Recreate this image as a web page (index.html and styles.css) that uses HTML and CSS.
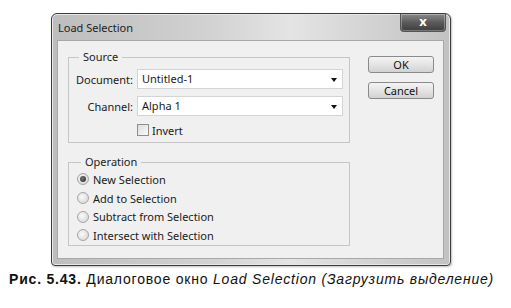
FILE: index.html
```html
<!DOCTYPE html>
<html lang="ru">
<head>
  <meta charset="UTF-8" />
  <title>Load Selection</title>
  <link rel="stylesheet" href="styles.css">
</head>
<body>

<div class="dialog">
  <div class="titlebar">
    <span class="title">Load Selection</span>
    <span class="close">x</span>
  </div>

  <div class="panel">
    <div class="groups">
      <fieldset class="group source">
        <legend>Source</legend>
        <div class="row">
          <label class="lbl">Document:</label>
          <div class="select">Untitled-1<span class="arrow"></span></div>
        </div>
        <div class="row">
          <label class="lbl">Channel:</label>
          <div class="select">Alpha 1<span class="arrow"></span></div>
        </div>
        <div class="row">
          <span class="lbl"></span>
          <label class="check"><span class="box"></span>Invert</label>
        </div>
      </fieldset>

      <fieldset class="group operation">
        <legend>Operation</legend>
        <label class="radio"><span class="dot on"></span>New Selection</label>
        <label class="radio"><span class="dot"></span>Add to Selection</label>
        <label class="radio"><span class="dot"></span>Subtract from Selection</label>
        <label class="radio"><span class="dot"></span>Intersect with Selection</label>
      </fieldset>
    </div>

    <div class="buttons">
      <button class="btn">OK</button>
      <button class="btn">Cancel</button>
    </div>
  </div>
</div>

<p class="caption"><b>Рис. 5.43.</b> Диалоговое окно <i>Load Selection (Загрузить выделение)</i></p>

</body>
</html>
```

FILE: styles.css
```css
body {
  margin: 0;
  background: white;
  font-family: "Noto Sans", sans-serif;
  font-size: 11px;
  color: #1a1a1a;
}
.dialog {
  margin: 13px 0 0 51px;
  width: 398px;
  height: 251px;
  border: 1px solid #3c3c3c;
  border-radius: 6px 6px 4px 4px;
  background: linear-gradient(to right, #bdbdbd, #d2d2d2 40%, #e4e4e4 60%, #c2c2c2);
  box-shadow: inset 0 0 0 1px #e8e8e8, 1px 1px 2px rgba(0,0,0,0.25);
  display: flex;
  flex-direction: column;
}
.titlebar {
  height: 26px;
  display: flex;
  justify-content: space-between;
  align-items: flex-start;
}
.title {
  margin: 6px 0 0 6px;
  font-size: 11px;
  color: #222;
}
.close {
  margin-right: 4px;
  width: 44px;
  height: 17px;
  border: 1px solid #555;
  border-top: none;
  border-radius: 0 0 4px 4px;
  background: linear-gradient(#8a8a8a, #5a5a5a 50%, #3e3e3e);
  color: white;
  font-weight: bold;
  font-size: 13px;
  line-height: 14px;
  text-align: center;
  box-shadow: inset 0 0 0 1px rgba(255,255,255,0.3);
}
.panel {
  margin: 0 6px 6px 5px;
  flex: 1;
  background: #f0f0f0;
  border: 1px solid #a8a8a8;
  display: flex;
  padding: 9px 0 0 10px;
}
.groups {
  width: 282px;
  display: flex;
  flex-direction: column;
  gap: 12px;
}
.group {
  margin: 0;
  border: 1px solid #c6c6c6;
  padding: 0 6px 5px 6px;
}
.group legend {
  margin-left: 4px;
  padding: 0 4px;
  line-height: 14px;
  font-size: 11px;
  color: #222;
}
.source {
  padding-top: 5px;
  display: flex;
  flex-direction: column;
  gap: 7px;
}
.row {
  display: flex;
  align-items: center;
}
.lbl {
  width: 58px;
  text-align: right;
  margin-right: 4px;
  white-space: nowrap;
}
.select {
  position: relative;
  flex: 1;
  height: 18px;
  line-height: 18px;
  padding-left: 4px;
  background: white;
  border: 1px solid #d4d4d4;
}
.arrow {
  position: absolute;
  right: 5px;
  top: 8px;
  border-left: 3px solid transparent;
  border-right: 3px solid transparent;
  border-top: 4px solid #111;
}
.check {
  display: flex;
  align-items: center;
  height: 14px;
}
.box {
  width: 10px;
  height: 10px;
  border: 1px solid #8e8e8e;
  background: linear-gradient(135deg, #dcdcdc, #fafafa);
  margin-right: 3px;
}
.operation {
  padding: 1px 6px 0 8px;
}
.radio {
  display: flex;
  align-items: center;
  height: 18.7px;
}
.dot {
  width: 10px;
  height: 10px;
  border: 1px solid #a6a6a6;
  border-radius: 50%;
  background: radial-gradient(circle at 40% 40%, #fafafa, #d0d0d0);
  margin-right: 4px;
  position: relative;
}
.dot.on::after {
  content: "";
  position: absolute;
  left: 2px;
  top: 2px;
  width: 6px;
  height: 6px;
  border-radius: 50%;
  background: radial-gradient(circle at 40% 40%, #777, #222);
}
.buttons {
  margin-left: 18px;
  padding-top: 6px;
  display: flex;
  flex-direction: column;
  gap: 9px;
}
.btn {
  width: 66px;
  height: 17px;
  padding: 0;
  border: 1px solid #8a8a8a;
  border-radius: 3px;
  background: linear-gradient(#f4f4f4, #e4e4e4 50%, #d2d2d2);
  font-family: "Noto Sans", sans-serif;
  font-size: 11px;
  line-height: 14px;
  color: #111;
}
.caption {
  margin: 5px 0 0 9px;
  font-family: "Liberation Sans", Arial, sans-serif;
  font-size: 14px;
  letter-spacing: 0.8px;
  color: #111;
}
```
